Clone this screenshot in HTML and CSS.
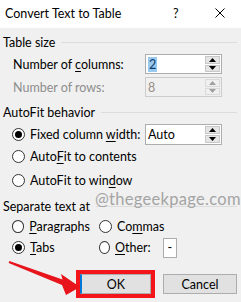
FILE: index.html
```html
<!DOCTYPE html>
<html>
	<head>
		<meta charset="utf-8" />
		<title>Convert Text to Table</title>
		<link rel="stylesheet" href="styles.css">
	</head>
	<body>
		<div class="dialog">
			<div class="titlebar">
				<span class="title">Convert Text to Table</span>
				<span class="help">?</span>
				<svg class="close" width="10" height="10" viewBox="0 0 10 10">
					<path d="M0.5 0.5 L9.5 9.5 M9.5 0.5 L0.5 9.5" stroke="#000" stroke-width="1" fill="none" />
				</svg>
			</div>
			<div class="content">
				<!-- Table size -->
				<div class="legend legend-first"><span>Table size</span><span class="rule"></span></div>
				<div class="row row-num">
					<span class="label">Number of <u>c</u>olumns:</span>
					<div class="spin">
						<span class="value"><span class="sel">2</span></span>
						<span class="arrows">
							<span class="arrow"><svg width="7" height="4" viewBox="0 0 7 4"><path d="M0 4 L3.5 0 L7 4 Z" fill="#000" /></svg></span>
							<span class="arrow"><svg width="7" height="4" viewBox="0 0 7 4"><path d="M0 0 L3.5 4 L7 0 Z" fill="#000" /></svg></span>
						</span>
					</div>
				</div>
				<div class="row row-num">
					<span class="label disabled">Number of rows:</span>
					<div class="spin spin-disabled">
						<span class="value">8</span>
						<span class="arrows">
							<span class="arrow"><svg width="7" height="4" viewBox="0 0 7 4"><path d="M0 4 L3.5 0 L7 4 Z" fill="#a0a0a0" /></svg></span>
							<span class="arrow"><svg width="7" height="4" viewBox="0 0 7 4"><path d="M0 0 L3.5 4 L7 0 Z" fill="#a0a0a0" /></svg></span>
						</span>
					</div>
				</div>

				<!-- AutoFit behavior -->
				<div class="legend legend-auto"><span>AutoFit behavior</span><span class="rule"></span></div>
				<div class="row row-fixed">
					<span class="radio checked"></span>
					<span class="radio-label">Fixed column <u>w</u>idth:</span>
					<div class="spin spin-auto">
						<span class="value">Auto</span>
						<span class="arrows">
							<span class="arrow"><svg width="7" height="4" viewBox="0 0 7 4"><path d="M0 4 L3.5 0 L7 4 Z" fill="#000" /></svg></span>
							<span class="arrow"><svg width="7" height="4" viewBox="0 0 7 4"><path d="M0 0 L3.5 4 L7 0 Z" fill="#000" /></svg></span>
						</span>
					</div>
				</div>
				<div class="row row-contents">
					<span class="radio"></span>
					<span class="radio-label">Auto<u>F</u>it to contents</span>
				</div>
				<div class="row row-window">
					<span class="radio"></span>
					<span class="radio-label">AutoFit to win<u>d</u>ow</span>
				</div>

				<!-- Separate text at -->
				<div class="legend legend-sep"><span>Separate text at</span><span class="rule"></span></div>
				<div class="row row-sep">
					<span class="opt">
						<span class="radio"></span>
						<span class="radio-label"><u>P</u>aragraphs</span>
					</span>
					<span class="opt">
						<span class="radio"></span>
						<span class="radio-label">Co<u>m</u>mas</span>
					</span>
				</div>
				<div class="row row-sep">
					<span class="opt">
						<span class="radio checked"></span>
						<span class="radio-label"><u>T</u>abs</span>
					</span>
					<span class="opt">
						<span class="radio"></span>
						<span class="radio-label"><u>O</u>ther:</span>
						<span class="other">-</span>
					</span>
				</div>

				<div class="buttons">
					<button class="btn btn-ok">OK</button>
					<button class="btn btn-cancel">Cancel</button>
				</div>
			</div>

			<div class="watermark">@thegeekpage.com</div>
			<svg class="pointer" width="90" height="50" viewBox="0 0 90 50">
				<path d="M9.3 6.1 L62.5 24.5 L61 19 L80 32 L66 40 L62 30 L8.7 7.9 Z" fill="#e8141b" />
			</svg>
		</div>
	</body>
</html>
```

FILE: styles.css
```css
body {
	margin: 0;
	background: #f0f0f0;
	font-family: Lato, 'Noto Sans', sans-serif;
	font-size: 12.5px;
	color: #000;
}
.dialog {
	position: relative;
	width: 241px;
	height: 302px;
	overflow: hidden;
}
.titlebar {
	display: flex;
	align-items: center;
	height: 28px;
	padding: 0 0 2px 5px;
	box-sizing: border-box;
	background: #fff;
}
.title {
	flex: 1;
	font-size: 12.5px;
}
.help {
	width: 8px;
	margin-right: 34px;
}
.close {
	margin-right: 16px;
}
.content {
	display: flex;
	flex-direction: column;
	padding: 0 0 0 3px;
}
u {
	text-decoration-thickness: 1px;
	text-underline-offset: 2px;
}

/* group headers */
.legend {
	display: flex;
	align-items: center;
	height: 20px;
	gap: 6px;
}
.legend .rule {
	flex: 1;
	height: 1px;
	background: #dcdcdc;
	margin-right: 4px;
}
.legend-first {
	margin-top: 4px;
}
.legend-auto {
	margin-top: 4px;
}
.legend-sep {
	margin-top: 3px;
}

/* rows */
.row {
	display: flex;
	align-items: center;
}
.row-num {
	height: 22px;
	margin-top: 1px;
}
.row-num .label {
	width: 132px;
	padding-left: 10px;
}
.disabled {
	color: #8d8d8d;
}
.row-fixed {
	height: 22px;
	margin-top: 1px;
}
.row-contents {
	height: 23px;
}
.row-window {
	height: 25px;
}
.row-sep {
	height: 21px;
}

/* spin boxes */
.spin {
	display: flex;
	width: 77px;
	height: 20px;
	box-sizing: border-box;
	border: 1px solid #adadad;
	background: #fff;
}
.spin-disabled {
	border-color: #cccccc;
	background: #f0f0f0;
	color: #9a8e86;
}
.spin-auto {
	height: 21px;
}
.value {
	flex: 1;
	display: flex;
	align-items: center;
	padding-left: 2px;
}
.sel {
	background: #99c9ef;
	color: #0a3b6e;
	padding: 0 1px;
	line-height: 15px;
}
.arrows {
	display: flex;
	flex-direction: column;
	width: 15px;
	padding: 1px;
	gap: 1px;
}
.arrow {
	flex: 1;
	display: flex;
	align-items: center;
	justify-content: center;
	background: #e5e5e5;
	border: 1px solid #c8c8c8;
}
.spin-disabled .arrow {
	background: #f0f0f0;
	border-color: #dadada;
}

/* radios */
.radio {
	width: 13px;
	height: 13px;
	box-sizing: border-box;
	border: 1px solid #333;
	border-radius: 50%;
	background: #fff;
	margin-left: 9px;
	margin-right: 5px;
	display: flex;
	align-items: center;
	justify-content: center;
}
.radio.checked::after {
	content: '';
	width: 7px;
	height: 7px;
	border-radius: 50%;
	background: #000;
}
.row-fixed .radio-label {
	width: 115px;
}
.opt {
	display: flex;
	align-items: center;
	width: 87px;
}
.other {
	display: flex;
	align-items: center;
	justify-content: center;
	width: 17px;
	height: 20px;
	box-sizing: border-box;
	border: 1px solid #adadad;
	background: #fff;
	margin-left: 12px;
}

/* buttons */
.buttons {
	display: flex;
	gap: 12px;
	margin-top: 16px;
	padding-left: 77px;
}
.btn {
	width: 74px;
	height: 20px;
	padding: 0;
	font-family: inherit;
	font-size: 12.5px;
	background: #e1e1e1;
	border: 1px solid #adadad;
	color: #000;
}
.btn-ok {
	width: 71px;
	border-left: 2px solid #0078d7;
	outline: 4px solid #f4141b;
	outline-offset: 0;
}

/* overlays */
.watermark {
	position: absolute;
	left: 95px;
	top: 189px;
	font-size: 16.5px;
	color: #a4a4a4;
	letter-spacing: 0.3px;
}
.pointer {
	position: absolute;
	left: 0;
	top: 255px;
}
```
